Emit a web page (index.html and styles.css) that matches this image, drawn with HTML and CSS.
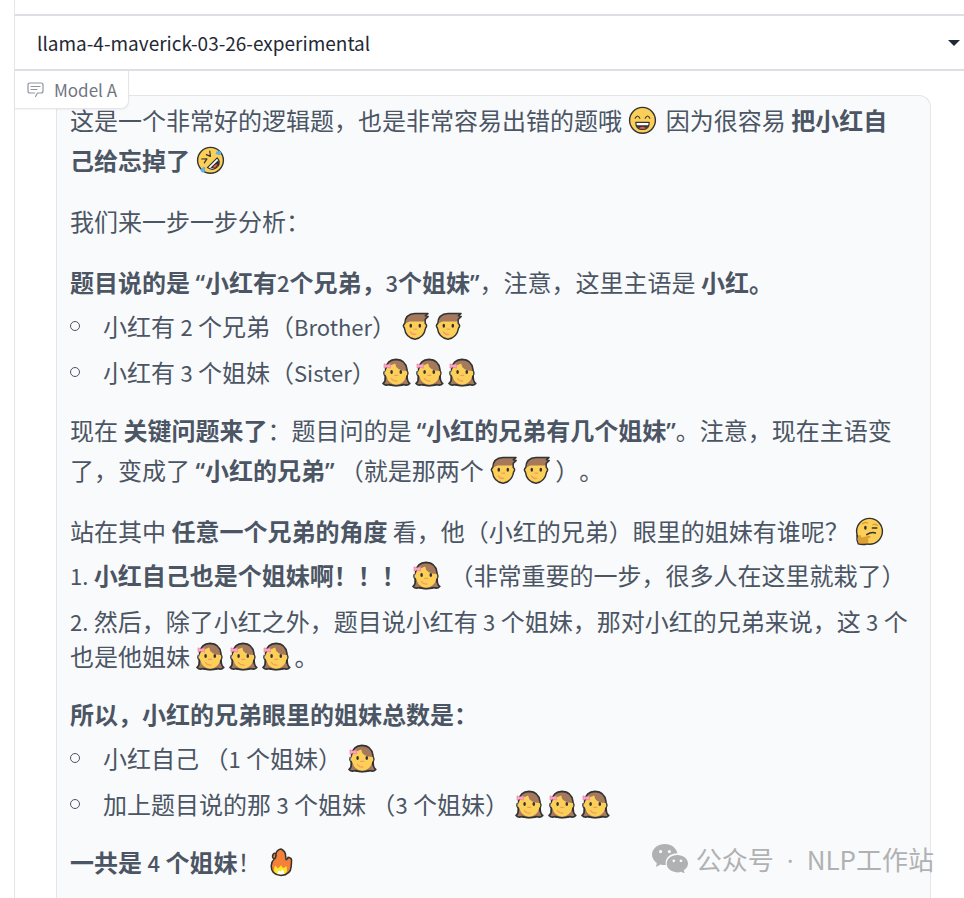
FILE: index.html
```html
<!DOCTYPE html>
<html lang="zh-CN">
<head>
  <meta charset="UTF-8">
  <title>Model A</title>
  <meta name="viewport" content="width=device-width,initial-scale=1">
  <link rel="stylesheet" href="styles.css">
</head>
<body>
  <svg class="sprite" aria-hidden="true">
    <symbol id="grin" viewBox="0 0 33 29">
      <circle cx="15.5" cy="14.3" r="12.9" fill="#fccf59" stroke="#333" stroke-width="1.4"/>
      <path d="M8.2 12.2q2.3-4.4 4.6 0M18.2 12.2q2.3-4.4 4.6 0" fill="none" stroke="#333" stroke-width="1.2" stroke-linecap="round"/>
      <path d="M8.8 16.4h13.4q0 7-6.7 7t-6.7-7z" fill="#fff" stroke="#333" stroke-width="1.2" stroke-linejoin="round"/>
      <path d="M9.4 19.2h12.2q-1.6 3.8-6.1 3.8t-6.1-3.8z" fill="#333"/>
      <path d="M12.2 22q3.3-2.6 6.6 0-3.3 1.8-6.6 0z" fill="#ea5a47"/>
    </symbol>
    <symbol id="rofl" viewBox="0 0 33 29">
      <circle cx="15.5" cy="14.3" r="12.9" fill="#fccf59" stroke="#333" stroke-width="1.4"/>
      <path d="M14.8 5.2l.6 5.2-4-1.8M6.7 13l5.2-.2-2.6 4" fill="none" stroke="#333" stroke-width="1.2" stroke-linecap="round" stroke-linejoin="round"/>
      <path d="M12.4 21.6l9.8-9.8q4 4.4.4 8.8-4.4 4.8-10.2 1z" fill="#fff" stroke="#333" stroke-width="1.2" stroke-linejoin="round"/>
      <path d="M15.4 21.8l8-7.8q1.8 3.6-1 6.4-3 2.8-7 1.4z" fill="#333"/>
      <path d="M18.2 21.8q.4-3.4 4.2-3.6-.8 3.2-4.2 3.6z" fill="#ea5a47"/>
      <path d="M20.6 7.6q.8-3.6 4-2.6 2.8 1.8 1 3.6-1.8 1.4-5-1zM9.6 20.6q1.4 4.4-.6 5.6-2.6.8-3.4-1.4-.2-2.2 4-4.2z" fill="#61b2e4"/>
    </symbol>
    <symbol id="think" viewBox="0 0 33 29">
      <circle cx="15.5" cy="14.3" r="12.9" fill="#fccf59" stroke="#333" stroke-width="1.4"/>
      <path d="M5 27q-2-4.6-.8-8.2 1-1.6 2.6-.2l.8 2 7.4-1.8q2.4 0 1 2l-2.4 1 1 1.4-1 3q-3.6 2-8.6.8z" fill="#e0a02f"/>
      <path d="M3 18.2q-.6 4.6 1.2 8.6 3.6 1.2 8.4.4" fill="none" stroke="#333" stroke-width="1.4"/>
      <path d="M8.6 6.8q2.6-2 5-.8M19 7.6q2.4-1 4.4.8" fill="none" stroke="#e0a02f" stroke-width="1.4" stroke-linecap="round"/>
      <ellipse cx="11.4" cy="10.8" rx="1.3" ry="2" fill="#333"/>
      <path d="M18.4 11h4.4M12.8 17.6q4.6-3 8.6-1.6" fill="none" stroke="#333" stroke-width="1.6" stroke-linecap="round"/>
    </symbol>
    <symbol id="boy" viewBox="0 0 33 29">
      <path d="M3.8 12Q4.2 2 14 2l10 1v8.2q2.6 2 .4 4.8-1.6 9.8-10.4 11.2-9.4-1.4-10.6-11.2-2.2-2.6.4-4z" fill="#fccf59"/>
      <path d="M3.8 11.5Q4.2 2 14 1.6h12.4L23.8 4l3 .6-2.8 3v1.800H8.600z" fill="#a57a5c"/>
      <path d="M3.8 11.5Q4.2 2 14 1.6h13l-2.800 2.200 3 .6-3 3v4q2.600 1.800.4 4.600-1.600 9.800-10.600 11.200-9.400-1.400-10.600-11.200-2.200-2.800.4-4.500z" fill="none" stroke="#333" stroke-width="1.5" stroke-linejoin="round"/>
      <ellipse cx="9.8" cy="13.8" rx="1.3" ry="2" fill="#333"/>
      <ellipse cx="18.8" cy="13.8" rx="1.3" ry="2" fill="#333"/>
      <path d="M9.4 20q2.4 3 5.4 2.4M13 17.2h2.6" fill="none" stroke="#f29b64" stroke-width="1.3" stroke-linecap="round"/>
    </symbol>
    <symbol id="girl" viewBox="0 0 33 29">
      <path d="M4.6 11Q6 1.6 15 1.4q9.8.4 11 10.2l.2 8q.4 4.6 2.6 5.8-2.2 2.6-6.2 1.2-7.2 1.8-14.4 0-4 1.4-6.2-1.2 2.2-1.2 2.4-5z" fill="#a57a5c" stroke="#333" stroke-width="1.6" stroke-linejoin="round"/>
      <path d="M4.8 12.5l2-4 7.4-3q.6 7 11.4 7.6 2.4 2.6-.4 5.2-2 7.8-10 8.400-8-.6-9.800-8.400-2.800-2.600-.6-5.800z" fill="#fccf59"/>
      <path d="M3.4 13q-1.600 3 .8 5.400v3M26.400 13q1.600 3-.8 5.400v3M8 27q7 1.600 14.400 0" fill="none" stroke="#333" stroke-width="1.2"/>
      <ellipse cx="10.6" cy="14" rx="1.3" ry="2" fill="#333"/>
      <ellipse cx="19.8" cy="14" rx="1.3" ry="1.9" fill="#333"/>
      <path d="M10.4 20.6q2.2 2.8 5.4 2.4M13.8 17.4h2.8" fill="none" stroke="#f29b64" stroke-width="1.3" stroke-linecap="round"/>
      <path d="M3 5.8L6 7l3.4-1.2v4.4L6 9l-3 1.2z" fill="#ffa7c0" stroke="#e67aa8" stroke-width=".6"/>
    </symbol>
    <symbol id="fire" viewBox="0 0 33 29">
      <path d="M14 27.6Q4.200 27 4.200 18q.2-4.400 2.800-6.800-2.400-2.200-.8-5 1.400-1.600 2.800-.4Q9.400 2 14 1q5 2.400 4.600 7.400l.6 3.400q1.800-.6 1.800-2.600 3.600.6 3.600 3l-.4 6.400q-.6 8-10.200 9z" fill="#f4803a"/>
      <path d="M8 25q-2-3.200.2-7.600l2.800 3.200 3.200-3.400 1.800 3 3.400-2q1.600 4.200-.8 7.200-5.200 3-10.600-.4z" fill="#fcea2b"/>
      <path d="M10.600 26q-.4-2.400 1.400-3.600l1.600 1.200 1.800-1.800q2.600 2 1.200 4.400-3.200 1-6-.2z" fill="#fff"/>
      <path d="M14 27.6Q4.200 27 4.200 18q.2-4.400 2.800-6.800-2.400-2.200-.8-5 1.400-1.600 2.800-.4Q9.400 2 14 1q5 2.400 4.600 7.400l.6 3.400q1.800-.6 1.800-2.600 3.600.6 3.600 3l-.4 6.400q-.6 8-10.200 9zM7 11.200q2.400-1.400 2-5.400" fill="none" stroke="#333" stroke-width="1.5" stroke-linejoin="round"/>
    </symbol>
  </svg>

  <main class="panel">
    <div class="picker">
      <select class="picker-select" aria-label="Model">
        <option>llama-4-maverick-03-26-experimental</option>
      </select>
      <svg class="caret" viewBox="0 0 12 6" aria-hidden="true"><path d="M0 0h12L6 6z"/></svg>
    </div>

    <section class="chat">
      <div class="chat-label">
        <svg class="chat-icon" viewBox="0 0 17 16" aria-hidden="true"><path d="M8.5 14.5l2-3.500h3.500q2 0 2-2V3q0-2-2-2H3Q1 1 1 3v6q0 2 2 2h4.500M4 4.500h9M4 7.500h6"/></svg>
        <span>Model A</span>
      </div>

      <article class="message">
        <p>这是一个非常好的逻辑题，也是非常容易出错的题哦 <svg class="emoji"><use href="#grin"/></svg> 因为很容易 <strong>把小红自己给忘掉了</strong> <svg class="emoji"><use href="#rofl"/></svg></p>
        <p>我们来一步一步分析：</p>
        <p><strong>题目说的是 <span class="quote">“</span>小红有<span class="latin">2</span>个兄弟，<span class="latin">3</span>个姐妹<span class="quote">”</span></strong>，注意，这里主语是 <strong>小红。</strong></p>
        <ul>
          <li><span>小红有 <span class="latin">2</span> 个兄弟（<span class="latin">Brother</span>） <svg class="emoji"><use href="#boy"/></svg><svg class="emoji"><use href="#boy"/></svg></span></li>
          <li><span>小红有 <span class="latin">3</span> 个姐妹（<span class="latin">Sister</span>） <svg class="emoji"><use href="#girl"/></svg><svg class="emoji"><use href="#girl"/></svg><svg class="emoji"><use href="#girl"/></svg></span></li>
        </ul>
        <p>现在 <strong>关键问题来了</strong>：题目问的是 <strong><span class="quote">“</span>小红的兄弟有几个姐妹<span class="quote">”</span></strong>。注意，现在主语变了，变成了 <strong><span class="quote">“</span>小红的兄弟<span class="quote">”</span></strong> （就是那两个 <svg class="emoji"><use href="#boy"/></svg><svg class="emoji"><use href="#boy"/></svg>）。</p>
        <p>站在其中 <strong>任意一个兄弟的角度</strong> 看，他（小红的兄弟）眼里的姐妹有谁呢？ <svg class="emoji"><use href="#think"/></svg></p>
        <ol>
          <li><span class="latin">1.</span> <strong>小红自己也是个姐妹啊！！！</strong> <svg class="emoji"><use href="#girl"/></svg> （非常重要的一步，很多人在这里就栽了）</li>
          <li><span class="latin">2.</span> 然后，除了小红之外，题目说小红有 <span class="latin">3</span> 个姐妹，那对小红的兄弟来说，这 <span class="latin">3</span> 个也是他姐妹 <svg class="emoji"><use href="#girl"/></svg><svg class="emoji"><use href="#girl"/></svg><svg class="emoji"><use href="#girl"/></svg>。</li>
        </ol>
        <p><strong>所以，小红的兄弟眼里的姐妹总数是：</strong></p>
        <ul>
          <li><span>小红自己 （<span class="latin">1</span> 个姐妹） <svg class="emoji"><use href="#girl"/></svg></span></li>
          <li><span>加上题目说的那 <span class="latin">3</span> 个姐妹 （<span class="latin">3</span> 个姐妹） <svg class="emoji"><use href="#girl"/></svg><svg class="emoji"><use href="#girl"/></svg><svg class="emoji"><use href="#girl"/></svg></span></li>
        </ul>
        <p><strong>一共是 <span class="latin">4</span> 个姐妹</strong>！ <svg class="emoji"><use href="#fire"/></svg></p>
      </article>
    </section>
  </main>

  <div class="watermark">
    <svg class="wechat" viewBox="0 0 36 29" aria-hidden="true">
      <path d="M13 0C5.8 0 0 4.7 0 10.6c0 3.4 1.9 6.3 4.8 8.3L4 23l4.6-2.6q2.6.8 5.2.7C12.4 14.5 17.5 9.4 25.5 9.2 24 3.8 19.3 0 13 0z"/>
      <path d="M25.3 11c-6 0-10.6 3.9-10.6 8.6 0 4.9 4.8 8.8 10.7 8.8q2 0 3.7-.6l3.5 1.6-.8-3.2C34.5 24.6 36 22.3 36 19.6c0-4.7-4.7-8.6-10.7-8.6z"/>
      <g class="wechat-eyes"><circle cx="8.6" cy="7.6" r="1.6"/><circle cx="17.4" cy="7.6" r="1.6"/><circle cx="21.8" cy="16.8" r="1.4"/><circle cx="29" cy="16.8" r="1.4"/></g>
    </svg>
    <span>公众号<span class="dot">·</span>NLP工作站</span>
  </div>
</body>
</html>
```
FILE: styles.css
```css
:root {
  --line: #e4e4e9;
  --rule: #dedee5;
  --card: #f9fafc;
  --text: #4b5563;
  --ink: #1f2937;
  --muted: #71757f;
}
*, *::before {box-sizing:border-box;}
body {
  margin:0; background:#fff; color:var(--text);
  font-family:"Noto Sans CJK SC", sans-serif;
  font-size:24px; text-spacing-trim:space-all;
  height:100vh; overflow:hidden;
}
.sprite {position:absolute; width:0; height:0;}

.panel {
  margin-left:14px; padding-top:14px;
  min-height:100vh;
  border-left:1px solid var(--line);
  display:flex; flex-direction:column;
}

/* model drop-down */
.picker {
  display:flex; align-items:center;
  height:57px; padding-right:4px;
  border-top:2px solid var(--rule);
  border-bottom:2px solid var(--rule);
}
.picker-select {
  flex:1; height:100%; padding:0 22px;
  appearance:none; border:0; background:none;
  color:var(--ink); font-family:inherit; font-size:19px;
}
.caret {width:12px; height:6px; fill:var(--ink);}

.chat {
  position:relative; flex:1;
  display:flex; flex-direction:column;
  padding:24px 33px 0 41px;
}
.chat-label {
  position:absolute; top:0; left:0;
  display:flex; align-items:center; gap:10px;
  height:38px; padding:0 11px 0 12px;
  background:#fff; color:var(--muted);
  border:1px solid var(--line); border-width:0 1px 1px 0;
  border-radius:0 0 8px 0;
  box-shadow:0 1px 2px #0000000d;
  font-size:17px;
}
.chat-icon {width:17px; height:16px; fill:none; stroke:#92959d; stroke-width:1.2; stroke-linejoin:round; stroke-linecap:round;}

/* message bubble */
.message {
  flex:1; padding:4px 20px 0 13px;
  background:var(--card);
  border:1px solid var(--line); border-bottom:0;
  border-radius:12px 12px 0 0;
}
.message p {margin:0 0 21px; line-height:40px;}
.message ul, .message ol {
  list-style:none; margin:-15px 0 21px; padding:0;
  display:flex; flex-direction:column; gap:11px;
  line-height:35px;
}
.message ul li {display:flex; align-items:center; gap:23px;}
.message ul li::before {
  content:""; width:10px; height:10px;
  border:1px solid var(--text); border-radius:50%;
}
.latin {font-family:"Noto Sans CJK KR", sans-serif; font-size:22px; line-height:1;}
.quote {font-family:"Open Sans", sans-serif; font-size:24px; line-height:1;}
strong .latin {font-weight:500;}
strong .quote {font-weight:600;}
.emoji {width:33px; height:29px; vertical-align:-5px;}

.watermark {
  position:absolute; right:30px; bottom:21px;
  display:flex; align-items:center; gap:8px;
  color:#b0b1b3; font-size:26px;
}
.dot {margin:0 13px; font-family:"Open Sans", sans-serif; line-height:1;}
.wechat {width:36px; height:29px; fill:#b0b1b3;}
.wechat-eyes {fill:var(--card);}
```
